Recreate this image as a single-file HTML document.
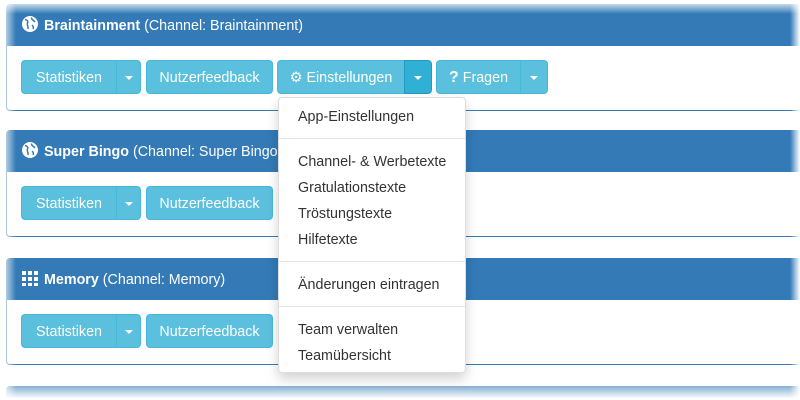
<!DOCTYPE html>
<html><head><meta charset="utf-8"><style>
*{box-sizing:border-box;margin:0;padding:0}
html,body{width:800px;height:400px;overflow:hidden}
body{background:#fff;font-family:"Liberation Sans",sans-serif;font-size:14px;position:relative}
.panel{position:absolute;left:6px;width:794px;border:1px solid #337ab7;border-right:none;border-radius:4px 0 0 4px;background:#fff}
.hd{height:41px;background:#337ab7;color:#fff;padding:1px 15px 0;line-height:40px;font-size:14.3px;white-space:nowrap}
.hd b{font-weight:bold}
.ic{display:inline-block;width:16px;height:16px;vertical-align:-2px;margin-right:6px}
.bd{height:64px;position:relative}
.btn{position:absolute;top:14px;height:34px;background:#5bc0de;border:1px solid #46b8da;color:#fff;line-height:34px;text-align:center;font-size:14.3px;white-space:nowrap}
.l{border-radius:4px 0 0 4px}.r{border-radius:0 4px 4px 0}.a{border-radius:4px}
.car{width:0;height:0;border-left:4px solid transparent;border-right:4px solid transparent;border-top:4px solid #fff;display:inline-block;vertical-align:2px}
.dd{position:absolute;left:278px;top:97px;width:188px;height:276px;background:#fff;border:1px solid #ddd;border-radius:4px;box-shadow:0 6px 12px rgba(0,0,0,.175);color:#333}
.it{position:absolute;left:19px;font-size:14.3px}
.dv{position:absolute;left:0;right:0;height:1px;background:#e5e5e5}
.fadeT{position:absolute;left:0;top:0;width:800px;height:14px;background:linear-gradient(#fff,rgba(255,255,255,0))}
.fadeL{position:absolute;left:0;top:0;width:16px;height:400px;background:linear-gradient(90deg,#fff,rgba(255,255,255,0))}
.fadeR{position:absolute;right:0;top:0;width:10px;height:400px;background:linear-gradient(270deg,#fff,rgba(255,255,255,0))}
.fadeB{position:absolute;left:0;top:386px;width:800px;height:14px;background:linear-gradient(rgba(255,255,255,.4),#fff 90%)}
</style></head><body>
<div class="panel" style="top:4px"><div class="hd"><svg class="ic" viewBox="0 0 16 16"><circle cx="8" cy="8" r="8" fill="#fff"/><path d="M3 3.5c2 .5 3.5 1.5 2.5 3.5s1 3 .5 6M9.5 1.5c-.5 2 2 2.5 3.5 4.5M10 9c1 1 2 2 1 4" stroke="#337ab7" stroke-width="1.5" fill="none"/></svg><b>Braintainment</b> (Channel: Braintainment)</div>
<div class="bd">
<div class="btn l" style="left:14px;width:96px">Statistiken</div><div class="btn r" style="left:109px;width:25px"><span class="car"></span></div>
<div class="btn a" style="left:139px;width:127px">Nutzerfeedback</div>
<div class="btn l" style="left:270px;width:128px">&#9881; Einstellungen</div><div class="btn r" style="left:397px;width:28px;background:#31b0d5;border-color:#269abc"><span class="car"></span></div>
<div class="btn l" style="left:429px;width:85px"><b style="font-size:16px">?</b> Fragen</div><div class="btn r" style="left:513px;width:28px"><span class="car"></span></div>
</div></div>
<div class="panel" style="top:130px"><div class="hd"><svg class="ic" viewBox="0 0 16 16"><circle cx="8" cy="8" r="8" fill="#fff"/><path d="M3 3.5c2 .5 3.5 1.5 2.5 3.5s1 3 .5 6M9.5 1.5c-.5 2 2 2.5 3.5 4.5M10 9c1 1 2 2 1 4" stroke="#337ab7" stroke-width="1.5" fill="none"/></svg><b>Super Bingo</b> (Channel: Super Bingo)</div>
<div class="bd">
<div class="btn l" style="left:14px;width:96px">Statistiken</div><div class="btn r" style="left:109px;width:25px"><span class="car"></span></div>
<div class="btn a" style="left:139px;width:127px">Nutzerfeedback</div>
</div></div>
<div class="panel" style="top:258px"><div class="hd"><svg class="ic" viewBox="0 0 16 16" fill="#fff"><rect x="0" y="1" width="4" height="4"/><rect x="6" y="1" width="4" height="4"/><rect x="12" y="1" width="4" height="4"/><rect x="0" y="7" width="4" height="4"/><rect x="6" y="7" width="4" height="4"/><rect x="12" y="7" width="4" height="4"/><rect x="0" y="13" width="4" height="3"/><rect x="6" y="13" width="4" height="3"/><rect x="12" y="13" width="4" height="3"/></svg><b>Memory</b> (Channel: Memory)</div>
<div class="bd">
<div class="btn l" style="left:14px;width:96px">Statistiken</div><div class="btn r" style="left:109px;width:25px"><span class="car"></span></div>
<div class="btn a" style="left:139px;width:127px">Nutzerfeedback</div>
</div></div>
<div class="panel" style="top:386px;height:14px;background:#337ab7"></div>
<div class="dd">
<div class="it" style="top:11px">App-Einstellungen</div>
<div class="dv" style="top:40px"></div>
<div class="it" style="top:56px">Channel- &amp; Werbetexte</div>
<div class="it" style="top:82px">Gratulationstexte</div>
<div class="it" style="top:108px">Tröstungstexte</div>
<div class="it" style="top:134px">Hilfetexte</div>
<div class="dv" style="top:163px"></div>
<div class="it" style="top:179px">Änderungen eintragen</div>
<div class="dv" style="top:208px"></div>
<div class="it" style="top:224px">Team verwalten</div>
<div class="it" style="top:250px">Teamübersicht</div>
</div>
<div class="fadeT"></div><div class="fadeL"></div><div class="fadeR"></div><div class="fadeB"></div>
</body></html>
